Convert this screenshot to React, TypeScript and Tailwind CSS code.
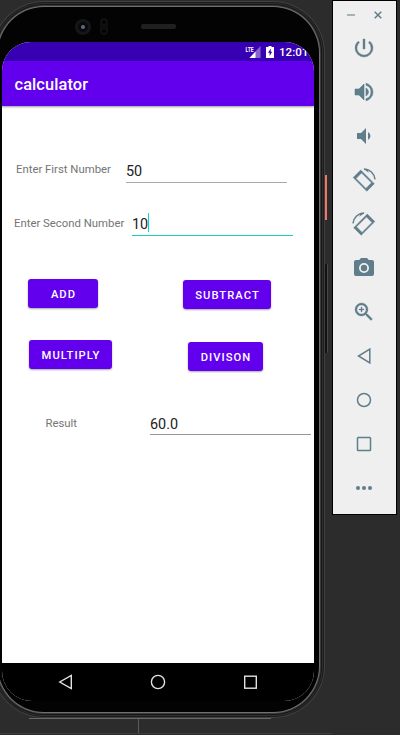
import type { ReactNode } from 'react';

function Icon({ size = 24, children }: { size?: number; children: ReactNode }) {
  return (
    <svg width={size} height={size} viewBox="0 0 24 24" fill="currentColor" className="block shrink-0">
      {children}
    </svg>
  );
}

function StatusBar() {
  return (
    <div className="flex h-[19px] shrink-0 items-center bg-[#3700b3] pl-[243px] text-white">
      <svg width="16" height="13" viewBox="0 0 16 13" className="mt-px block shrink-0">
        <path d="M15.500 0V12H4.500Z" fill="#8466cf" />
        <path d="M10.500 5.500V12H4.500Z" fill="#fff" />
        <text x="0.500" y="6" fontSize="7.500" fontWeight="700" textLength="8" lengthAdjust="spacingAndGlyphs" fill="#fff" fontFamily="Roboto, sans-serif">LTE</text>
      </svg>
      <svg width="8" height="12" viewBox="0 0 8 12" className="ml-[5px] block shrink-0">
        <path d="M2.500 0h3v1H8v11H0V1h2.500Z" fill="#fff" />
        <path d="M4.700 2.600 2 6.800h1.600v3.200L6.200 5.800H4.700Z" fill="#3700b3" />
      </svg>
      <span className="ml-[5px] mt-[2px] text-[11.6px] leading-none font-medium whitespace-nowrap">12:01</span>
    </div>
  );
}

function Label({ className, children }: { className: string; children: ReactNode }) {
  return <span className={`shrink-0 text-[11.35px] leading-[14px] whitespace-nowrap text-[#757575] ${className}`}>{children}</span>;
}

function AppButton({ className, children }: { className: string; children: ReactNode }) {
  return (
    <button className={`h-[29px] shrink-0 rounded-[3px] bg-[#6200ee] pt-[4px] pl-px text-[11.2px] font-medium tracking-[1.05px] text-white shadow-[0_1px_2px_rgba(0,0,0,0.35)] ${className}`}>
      {children}
    </button>
  );
}

function Screen() {
  return (
    <div className="flex h-[659px] w-[312px] flex-col overflow-hidden rounded-t-[29px] rounded-b-[30px] bg-white">
      <StatusBar />
      <header className="relative flex h-[45px] shrink-0 items-center bg-[#6200ee] pt-[3px] pl-[12.5px] text-[16.400px] font-medium tracking-[0.1px] text-white shadow-[0_1px_2px_rgba(0,0,0,0.4)]">
        calculator
      </header>
      <main className="flex-1">
        <div className="flex pt-[54px]">
          <Label className="ml-[14px] mt-[2px] w-[110px]">Enter First Number</Label>
          <div className="h-[23px] w-[161px] border-b border-[#a8a8a8] text-[14.4px] leading-[24px] text-[#212121]">50</div>
        </div>
        <div className="flex pt-[30px]">
          <Label className="ml-[12px] mt-[3px] w-[118px]">Enter Second Number</Label>
          <div className="flex h-[23px] w-[161px] border-b border-[#19cdbb] text-[14.4px] leading-[24px] text-[#212121]">
            10<span className="h-[19px] w-px bg-[#03dac5]" />
          </div>
        </div>
        <div className="flex items-start pt-[43px] pl-[26px]">
          <AppButton className="w-[70px]">ADD</AppButton>
          <AppButton className="mt-px ml-[85px] w-[88px]">SUBTRACT</AppButton>
        </div>
        <div className="flex items-start pt-[31px] pl-[27px]">
          <AppButton className="w-[83px]">MULTIPLY</AppButton>
          <AppButton className="mt-[2px] ml-[76px] w-[75px]">DIVISON</AppButton>
        </div>
        <div className="flex pt-[41px]">
          <Label className="ml-[43.5px] mt-[4px] w-[104.5px]">Result</Label>
          <div className="h-[23px] w-[161px] border-b border-[#969696] text-[14.4px] leading-[26px] text-[#212121]">60.0</div>
        </div>
      </main>
      <nav className="flex h-[38px] shrink-0 items-center bg-black pl-[54px] text-[#e2e2e2]">
        <svg width="18" height="18" viewBox="0 0 18 18" fill="none" stroke="currentColor" strokeWidth="1.4" className="block">
          <path d="M15.300 2.500v13L3.800 9Z" />
        </svg>
        <svg width="18" height="18" viewBox="0 0 18 18" fill="none" stroke="currentColor" strokeWidth="1.4" className="ml-[75px] block">
          <circle cx="9" cy="9" r="6.600" />
        </svg>
        <svg width="18" height="18" viewBox="0 0 18 18" fill="none" stroke="currentColor" strokeWidth="1.4" className="ml-[74px] block">
          <rect x="3.700" y="3.200" width="11.600" height="12" />
        </svg>
      </nav>
    </div>
  );
}

function Phone() {
  return (
    <div className="relative h-[735px] w-[332px] shrink-0 overflow-hidden">
      <div className="mt-[7px] ml-[-2px] h-[705px] w-[321px] rounded-[46px] bg-[#030304] pt-px pl-[4px] shadow-[0_0_0_1px_#707072,0_0_0_2px_#3b3b3d,0_0_0_3px_#161618,0_0_0_4px_#2f2f31,0_0_0_5px_#1c1c1e,0_0_0_6px_#404040]">
        <div className="flex h-[34px] items-center">
          <span className="mt-[3px] ml-[73px] flex size-[16px] items-center justify-center rounded-full bg-[#161616]">
            <span className="flex size-[10px] items-center justify-center rounded-full bg-[#08090d]">
              <span className="size-[4px] rounded-full bg-[#606a86]" />
            </span>
          </span>
          <span className="mt-[3px] ml-[9px] flex h-[17px] w-[8px] flex-col items-center justify-between rounded-full bg-[#0e0e0e] py-[1px]">
            <span className="size-[6px] rounded-full border border-[#161616] bg-black" />
            <span className="size-[6px] rounded-full border border-[#161616] bg-black" />
          </span>
          <span className="mt-[3px] ml-[33px] h-[5px] w-[35px] rounded-[2px] bg-[#202020]" />
        </div>
        <Screen />
      </div>
      <span className="absolute top-[175px] left-[325px] h-[45px] w-[2px] bg-[#ed7764]" />
      <span className="absolute top-[264px] left-[325px] h-[89px] w-[3px] rounded-[1px] border-r border-[#484848] bg-[#111111]" />
      <span className="absolute top-[718px] left-[29px] h-px w-[242px] bg-[#686868]" />
      <span className="absolute top-[719px] left-[138px] h-[14px] w-px bg-[#5a5a5a]" />
      <span className="absolute top-[733px] left-0 h-px w-full bg-[#3d3b3d]" />
    </div>
  );
}

function Toolbar() {
  return (
    <aside className="flex h-[515px] w-[65px] shrink-0 flex-col items-center border border-black bg-[#efefef] text-[#607d8b]">
      <div className="flex h-[25px] w-full shrink-0 items-center pt-[3px]">
        <span className="ml-[14px] h-[2px] w-[8px] bg-[#a3b3bb]" />
        <svg width="8" height="8" viewBox="0 0 8 8" fill="none" stroke="currentColor" strokeWidth="1.5" className="ml-[19px] block">
          <path d="m.7.700 6.600 6.600M7.300.7.700 7.300" />
        </svg>
      </div>
      <div className="mt-[10px] mr-[2px] flex flex-col gap-[20px]">
        <Icon><path d="M13 3h-2v10h2V3Zm4.830 2.170-1.420 1.420A6.920 6.920 0 0 1 19 12a7 7 0 1 1-11.420-5.420L6.170 5.170A8.930 8.930 0 0 0 3 12a9 9 0 1 0 18 0c0-2.740-1.230-5.180-3.170-6.830Z" stroke="currentColor" strokeWidth=".4" /></Icon>
        <Icon><path d="M3 9v6h4l5 5V4L7 9H3Zm13.500 3A4.500 4.500 0 0 0 14 7.970v8.050A4.500 4.500 0 0 0 16.500 12ZM14 3.230v2.060a7 7 0 0 1 0 13.420v2.060A9 9 0 0 0 14 3.230Z" stroke="currentColor" strokeWidth=".6" /></Icon>
        <Icon><path d="M18.500 12A4.500 4.500 0 0 0 16 7.970v8.050A4.500 4.500 0 0 0 18.500 12ZM5 9v6h4l5 5V4L9 9H5Z" /></Icon>
        <RotateIcon />
        <div className="-scale-x-100"><RotateIcon /></div>
        <Icon><circle cx="12" cy="12" r="3.200" /><path d="M9 2 7.170 4H4a2 2 0 0 0-2 2v12a2 2 0 0 0 2 2h16a2 2 0 0 0 2-2V6a2 2 0 0 0-2-2h-3.170L15 2H9Zm3 15a5 5 0 1 1 0-10 5 5 0 0 1 0 10Z" /></Icon>
        <Icon><path d="M15.500 14h-.79l-.28-.27A6.500 6.500 0 1 0 13.730 14.430l.27.280v.79l5 4.990L20.490 19l-4.990-5Zm-6 0a4.500 4.500 0 1 1 0-9 4.500 4.500 0 0 1 0 9Zm2.500-4h-2v2H9v-2H7V9h2V7h1v2h2v1Z" stroke="currentColor" strokeWidth=".3" /></Icon>
        <Icon><path d="M17.800 5v14L6.500 12Z" fill="none" stroke="currentColor" strokeWidth="1.500" /></Icon>
        <Icon><circle cx="12" cy="12" r="6.500" fill="none" stroke="currentColor" strokeWidth="1.500" /></Icon>
        <Icon><rect x="5.500" y="5.500" width="13" height="13" rx=".8" fill="none" stroke="currentColor" strokeWidth="1.500" /></Icon>
        <Icon><circle cx="6" cy="12" r="2" /><circle cx="12" cy="12" r="2" /><circle cx="18" cy="12" r="2" /></Icon>
      </div>
    </aside>
  );
}

function RotateIcon() {
  return (
    <Icon>
      <path
        fillRule="evenodd"
        stroke="currentColor"
        strokeWidth=".5"
        strokeLinejoin="round"
        d="M1.200 9.600 8.700 2.100 22.300 15.700 14.800 23.200ZM4 10.450 13.950 20.400 19.500 14.850 9.550 4.900Z"
      />
      <path d="M12 1.300c5.800-.3 10.300 4 11 10" fill="none" stroke="currentColor" strokeWidth="1.500" />
      <path d="M11.300.7h4l1.500 4Z" />
    </Icon>
  );
}

export default function App() {
  return (
    <div className="flex h-[735px] w-[400px] overflow-hidden bg-[#2c2c2c] font-[Roboto,sans-serif] antialiased">
      <Phone />
      <Toolbar />
    </div>
  );
}
